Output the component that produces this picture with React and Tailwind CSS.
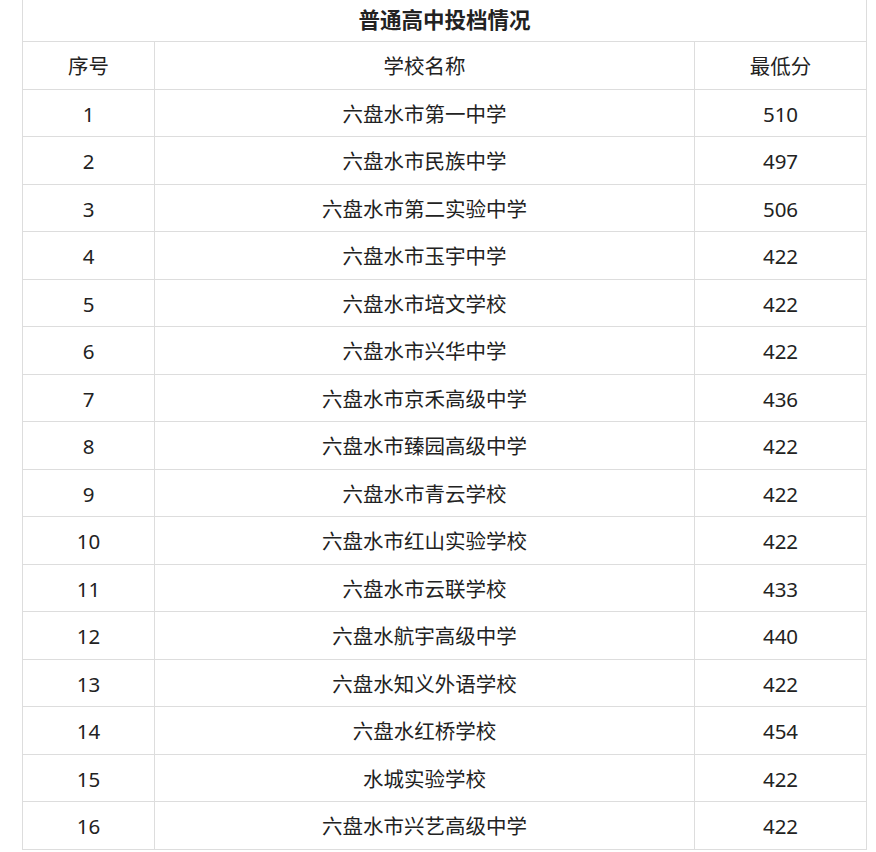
import React from "react";

const rows = [
  ["1", "六盘水市第一中学", "510"],
  ["2", "六盘水市民族中学", "497"],
  ["3", "六盘水市第二实验中学", "506"],
  ["4", "六盘水市玉宇中学", "422"],
  ["5", "六盘水市培文学校", "422"],
  ["6", "六盘水市兴华中学", "422"],
  ["7", "六盘水市京禾高级中学", "436"],
  ["8", "六盘水市臻园高级中学", "422"],
  ["9", "六盘水市青云学校", "422"],
  ["10", "六盘水市红山实验学校", "422"],
  ["11", "六盘水市云联学校", "433"],
  ["12", "六盘水航宇高级中学", "440"],
  ["13", "六盘水知义外语学校", "422"],
  ["14", "六盘水红桥学校", "454"],
  ["15", "水城实验学校", "422"],
  ["16", "六盘水市兴艺高级中学", "422"],
];

const Row = ({ cells }) => (
  <div className="grid grid-cols-[132px_540px_1fr] h-[47.5px] border-b border-[#dddddd]">
    <div className="flex items-center justify-center pt-[3px] border-r border-[#dddddd]">{cells[0]}</div>
    <div className="flex items-center justify-center pt-[3px] border-r border-[#dddddd]">{cells[1]}</div>
    <div className="flex items-center justify-center pt-[3px]">{cells[2]}</div>
  </div>
);

export default function App() {
  return (
    <div
      className="w-[876px] h-[852px] overflow-hidden bg-white text-[#222222] text-[20.5px]"
      style={{ fontFamily: '"Noto Sans", "Noto Sans CJK SC", sans-serif' }}
    >
      <div className="ml-[22px] w-[845px] border-l border-r border-[#dddddd]">
        <div className="h-[42px] flex items-center justify-center border-b border-[#dddddd] font-bold text-[21.5px]">
          普通高中投档情况
        </div>
        <Row cells={["序号", "学校名称", "最低分"]} />
        {rows.map((r) => (
          <Row key={r[0]} cells={r} />
        ))}
      </div>
    </div>
  );
}
